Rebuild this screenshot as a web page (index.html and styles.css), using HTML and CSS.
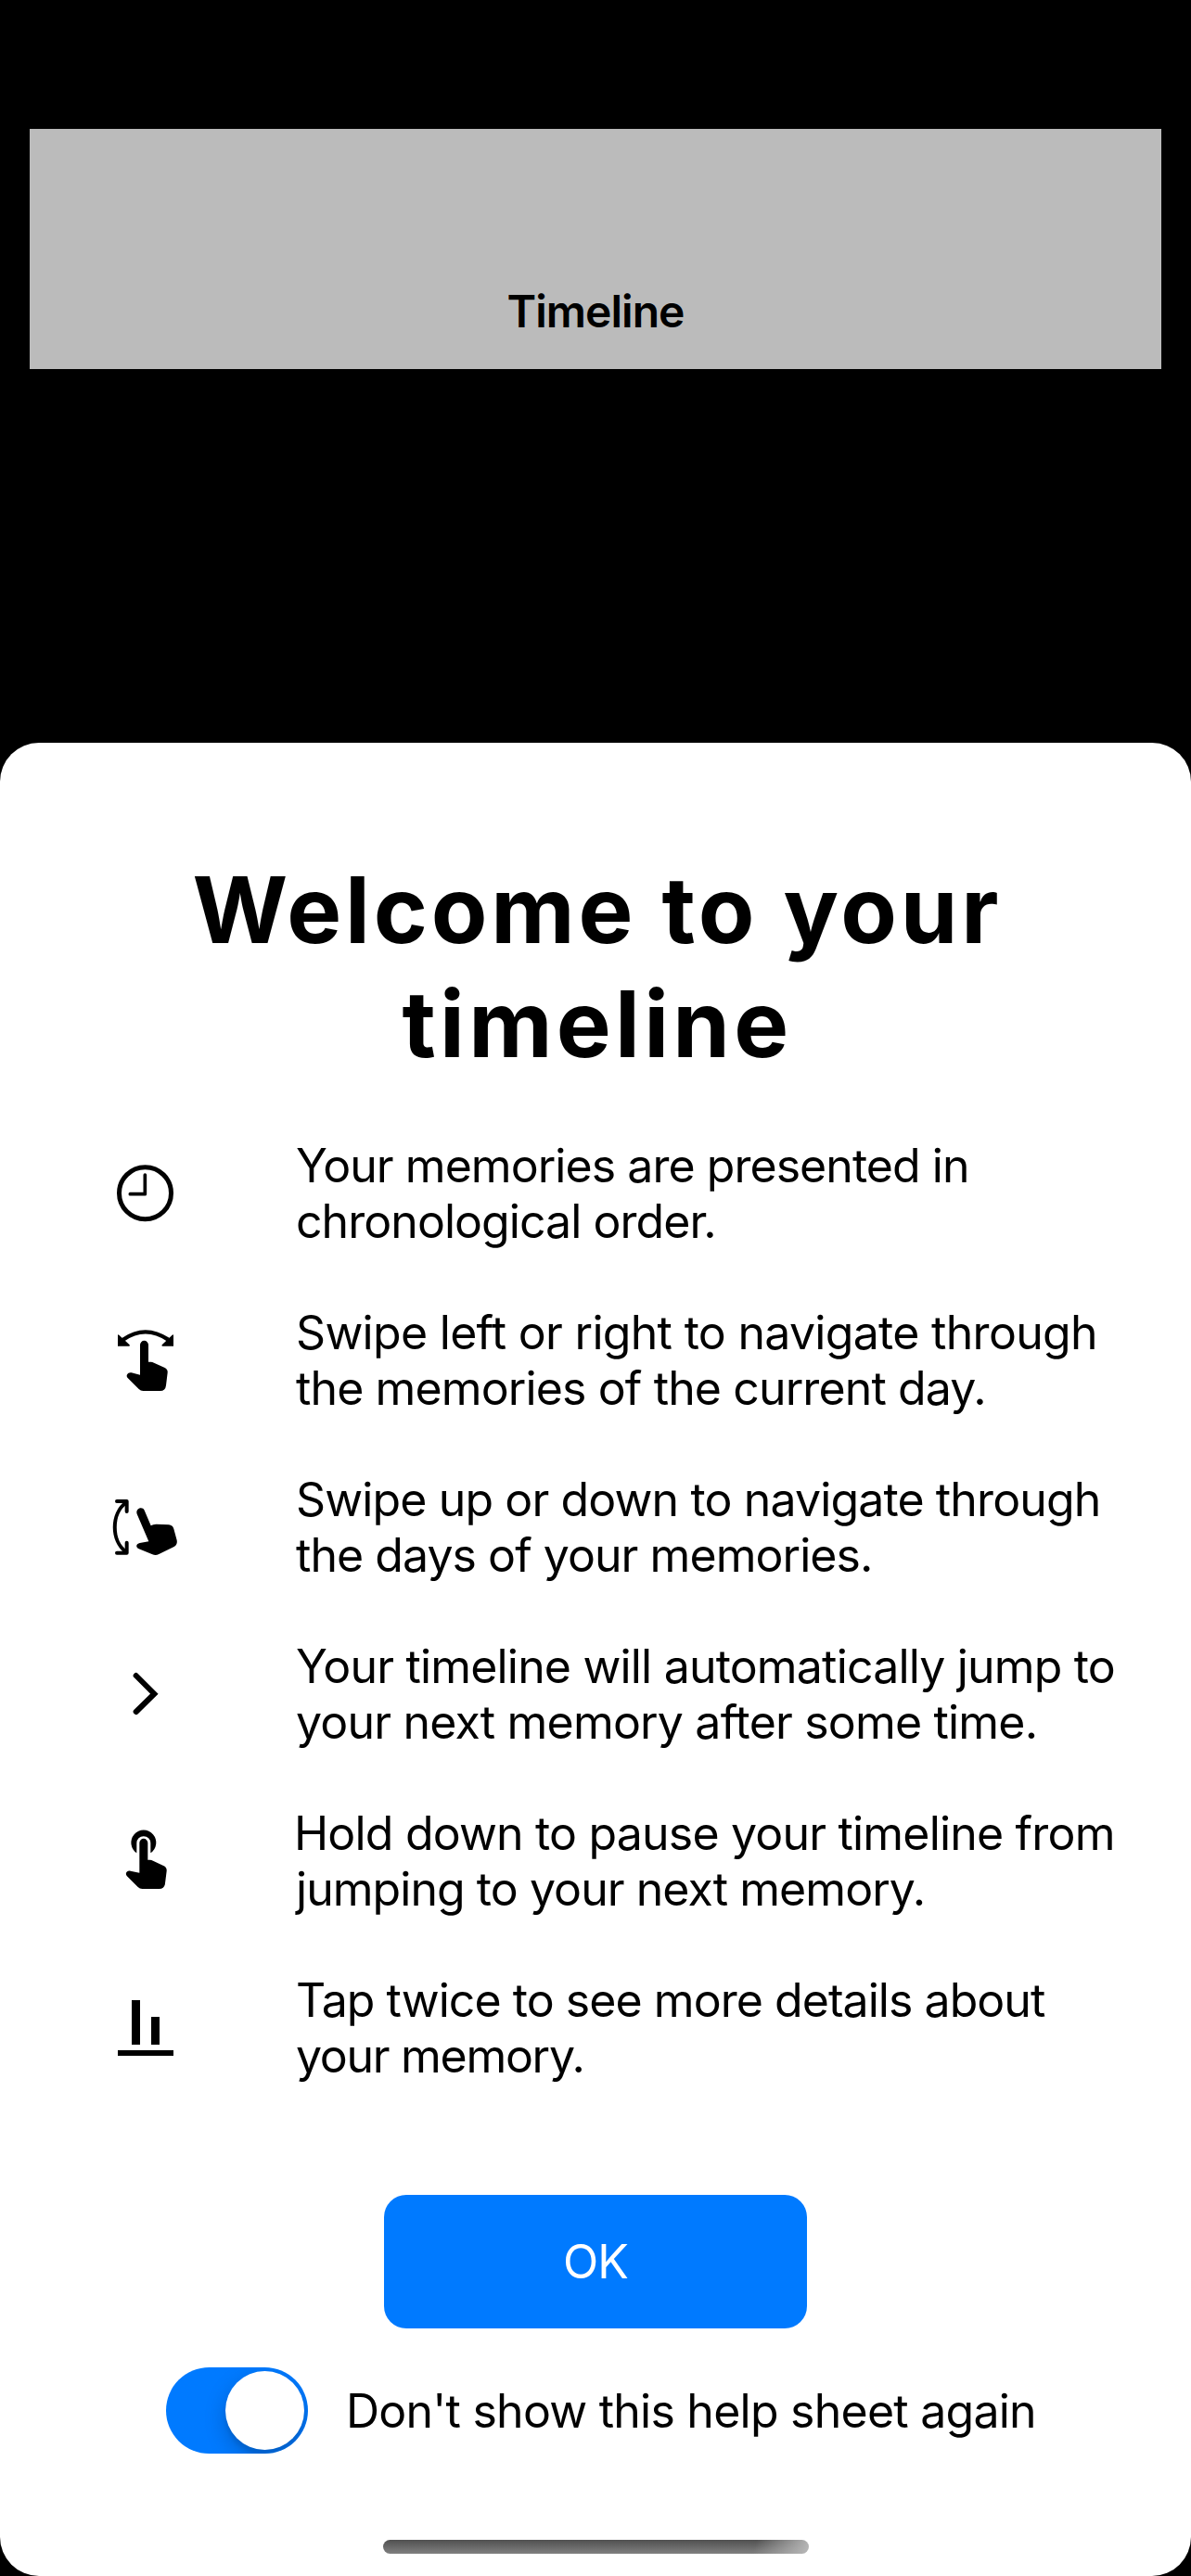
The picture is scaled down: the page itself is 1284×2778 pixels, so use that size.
FILE: index.html
```html
<!DOCTYPE html>
<html lang="en">
<head>
<meta charset="utf-8">
<title>Timeline</title>
<link rel="stylesheet" href="styles.css">
</head>
<body>
<header class="header"><h2 class="header-title">Timeline</h2></header>
<main class="sheet">
  <h1 class="title"><span class="line">Welcome to your</span> <span class="line">timeline</span></h1>
  <ul class="tips">
    <li class="tip">
      <svg class="icon" viewBox="0 0 360 360"><g fill="none" stroke="#000" stroke-linecap="round" stroke-linejoin="round"><circle cx="169.500" cy="170" r="84" stroke-width="15"/><path d="M169 111V173H121" stroke-width="11"/></g></svg>
      <p class="text"><span class="line">Your memories are presented in</span> <span class="line">chronological order.</span></p>
    </li>
    <li class="tip">
      <svg class="icon" viewBox="0 0 360 360"><path d="M98 104Q170 54 244 104" fill="none" stroke="#000" stroke-width="13"/><path d="M81 90Q81 86 85 89L119 121Q122 125 117 125H81ZM261 90Q261 86 257 89L224 121Q221 125 226 125H261Z"/><path d="M153 121A13.500 13.500 0 0 1 180 121V176H188Q193 176 198 179L233 195Q243 200 242 211L237 252Q235 270 218 270H163Q155 270 149 264L113 228C105 219 115 208 125 211L153 218Z"/></svg>
      <p class="text"><span class="line">Swipe left or right to navigate through</span> <span class="line">the memories of the current day.</span></p>
    </li>
    <li class="tip">
      <svg class="icon" viewBox="0 0 360 360"><g fill="none" stroke="#000" stroke-width="12" stroke-linecap="round" stroke-linejoin="round"><path d="M78 87H110V120M78 254H110V221"/><path d="M108 91C59 126 59 216 108 251"/></g><path d="M143 128C137 111 160 102 167 116L188 166Q195 161 205 161L246 163Q258 164 262 176L272 213Q275 227 263 234L214 258Q204 263 193 259L149 241C137 235 141 224 152 222L181 217Z"/></svg>
      <p class="text"><span class="line">Swipe up or down to navigate through</span> <span class="line">the days of your memories.</span></p>
    </li>
    <li class="tip">
      <svg class="icon" viewBox="0 0 360 360"><path d="M140 111L199 170L140 228" fill="none" stroke="#000" stroke-width="18" stroke-linecap="round"/></svg>
      <p class="text"><span class="line">Your timeline will automatically jump to</span> <span class="line">your next memory after some time.</span></p>
    </li>
    <li class="tip">
      <svg class="icon" viewBox="0 0 360 360"><path d="M142 145A40.500 40.500 0 1 1 187 145V113A22.500 22.500 0 0 0 142 113Z"/><path d="M151 112A13.500 13.500 0 0 1 178 112V167H185Q190 167 195 170L230 187Q240 192 239 203L234 243Q232 261 215 261H160Q152 261 146 255L110 219C103 210 112 200 122 203L151 209Z"/></svg>
      <p class="text"><span class="line">Hold down to pause your timeline from</span> <span class="line">jumping to your next memory.</span></p>
    </li>
    <li class="tip">
      <svg class="icon" viewBox="0 0 360 360"><path d="M126 81H153V225H126ZM189 135H216V225H189ZM81 243H261V261H81Z"/></svg>
      <p class="text"><span class="line">Tap twice to see more details about</span> <span class="line">your memory.</span></p>
    </li>
  </ul>
  <button class="ok" type="button">OK</button>
  <div class="option">
    <div class="switch" role="switch" aria-checked="true" aria-label="Don't show this help sheet again"><div class="knob"></div></div>
    <span class="option-label">Don't show this help sheet again</span>
  </div>
  <div class="home-indicator"></div>
</main>
</body>
</html>
```
FILE: styles.css
```css
* {
  box-sizing: border-box;
  margin: 0;
  padding: 0;
}

body {
  width: 1284px;
  height: 2778px;
  display: flex;
  flex-direction: column;
  overflow: hidden;
  background: #000;
  color: #000;
  font-family: Inter, "Liberation Sans", sans-serif;
  font-size: 50px;
  line-height: 60px;
}

.header {
  height: 259px;
  margin: 139px 32px 403px;
  padding-bottom: 33px;
  display: flex;
  align-items: flex-end;
  justify-content: center;
  background: #bbb;
}

.header-title {
  font-size: 48px;
  font-weight: 600;
  line-height: 58px;
  letter-spacing: -0.97px;
}

.sheet {
  flex: 1;
  display: flex;
  flex-direction: column;
  align-items: center;
  padding-top: 119px;
  border-radius: 42px;
  background: #fff;
}

.line {
  display: block;
  white-space: nowrap;
}

.title {
  padding-left: 4px;
  font-size: 99px;
  font-weight: 700;
  line-height: 123px;
  letter-spacing: 3.84px;
  text-align: center;
}

.title .line:last-child {
  letter-spacing: 4.3px;
}

.tips {
  align-self: stretch;
  display: flex;
  flex-direction: column;
  gap: 60px;
  margin-top: 61px;
  padding-left: 100px;
  list-style: none;
}

.tip {
  height: 120px;
  display: flex;
  gap: 99px;
}

.icon {
  width: 120px;
  height: 120px;
  margin-top: 3px;
  flex: none;
}

.text {
  letter-spacing: -0.95px;
}

.tip:nth-child(2) .line { letter-spacing: -0.88px; }
.tip:nth-child(2) .line:first-child { letter-spacing: -0.7px; }
.tip:nth-child(3) .line:first-child { letter-spacing: -0.87px; }
.tip:nth-child(4) .line { letter-spacing: -0.82px; }
.tip:nth-child(5) .line:first-child { margin-left: -2px; letter-spacing: -0.81px; }
.tip:nth-child(6) .line:last-child { letter-spacing: -1.3px; }

.ok {
  width: 456px;
  height: 144px;
  margin-top: 120px;
  border: 0;
  border-radius: 24px;
  background: #007aff;
  color: #fff;
  font: inherit;
  letter-spacing: -0.9px;
}

.option {
  align-self: stretch;
  display: flex;
  align-items: center;
  gap: 41px;
  margin-top: 42px;
  padding-left: 179px;
}

.switch {
  width: 153px;
  height: 93px;
  padding: 4px;
  display: flex;
  justify-content: flex-end;
  overflow: hidden;
  border-radius: 47px;
  background: #007aff;
}

.knob {
  width: 85px;
  height: 85px;
  border-radius: 50%;
  background: #fff;
  box-shadow: 0 9px 24px rgba(0, 0, 0, 0.2), 0 6px 4px rgba(0, 0, 0, 0.08);
}

.option-label {
  letter-spacing: -0.76px;
  white-space: nowrap;
}

.home-indicator {
  width: 459px;
  height: 15px;
  margin-top: 93px;
  border-radius: 8px;
  background:
    linear-gradient(105deg, rgba(190, 190, 190, 0) 87%, #b8b8b8 100%),
    linear-gradient(#505050, #808080);
}
```
